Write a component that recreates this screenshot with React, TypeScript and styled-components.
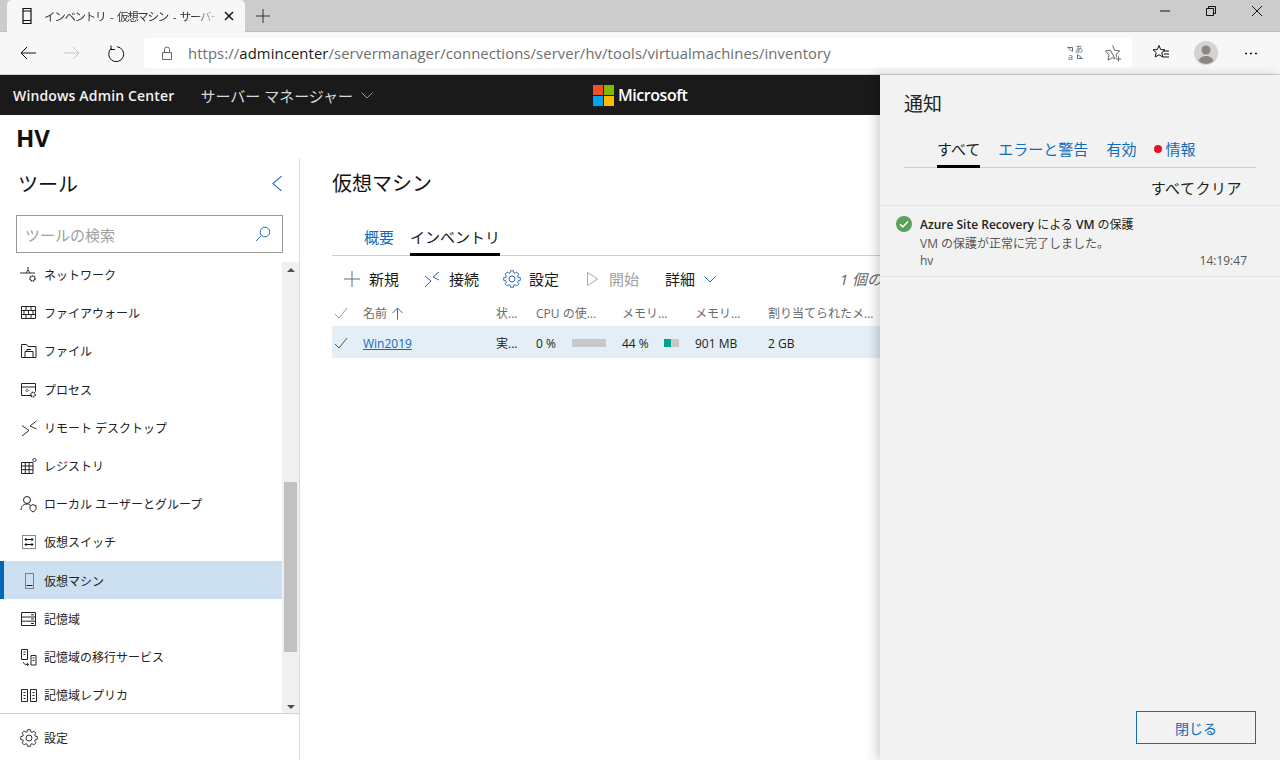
import styled, { createGlobalStyle } from "styled-components"

const font = `"Open Sans", "Noto Sans CJK JP", sans-serif`

const GlobalStyle = createGlobalStyle`
  html, body, #root {
    margin: 0;
    height: 100%;
    overflow: hidden;
  }
  * {
    box-sizing: border-box;
  }
  body {
    font-family: ${font};
    color: #1a1a1a;
    background: #fff;
  }
`

const Frame = styled.div`
  display: flex;
  flex-direction: column;
  width: 1280px;
  height: 760px;
`

/* browser chrome */
const TabStrip = styled.div`
  display: flex;
  align-items: flex-end;
  height: 32px;
  padding-left: 7px;
  background: #cccccc;
  border-bottom: 1px solid #bdbdbd;
`
const BrowserTab = styled.div`
  display: flex;
  align-items: center;
  width: 238px;
  height: 32px;
  margin-bottom: -1px;
  padding: 0 10px 0 11px;
  background: #f7f7f7;
  border-radius: 5px 5px 0 0;
`
const TabTitle = styled.span`
  width: 176px;
  margin-left: 8px;
  overflow: hidden;
  white-space: nowrap;
  font-size: 11.5px;
  letter-spacing: -1.3px;
  word-spacing: 3px;
  color: #333;
  mask-image: linear-gradient(to right, #000 150px, transparent 176px);
`
const TabClose = styled.span`
  display: flex;
  margin-left: 8px;
`
const NewTab = styled.span`
  display: flex;
  margin-left: 10px;
  align-self: center;
`
const WindowControls = styled.div`
  display: flex;
  align-self: flex-start;
  align-items: center;
  gap: 34px;
  height: 22px;
  margin-left: auto;
  padding-right: 17px;
`
const ToolBar = styled.div`
  display: flex;
  align-items: center;
  height: 43px;
  padding-bottom: 1px;
  background: #f7f7f7;
  border-bottom: 1px solid #d2d2d2;
`
const NavIcons = styled.div`
  display: flex;
  align-items: center;
  gap: 26px;
  width: 144px;
  padding-left: 19px;
`
const AddressBar = styled.div`
  display: flex;
  align-items: center;
  width: 988px;
  height: 30px;
  padding: 0 10px 0 16px;
  background: #fff;
  border-radius: 4px;
`
const Url = styled.span`
  margin-left: 14px;
  font-size: 14.8px;
  letter-spacing: 0.11px;
  color: #6e6e6e;
  white-space: nowrap;
  b {
    font-weight: 400;
    color: #1a1a1a;
  }
`
const AddressActions = styled.div`
  display: flex;
  align-items: center;
  gap: 20px;
  margin-left: auto;
`
const ToolActions = styled.div`
  display: flex;
  align-items: center;
  gap: 24px;
  margin-left: 20px;
`
const Avatar = styled.span`
  display: flex;
`

/* app bar */
const AppBar = styled.div`
  display: grid;
  grid-template-columns: 593px auto 1fr;
  align-items: center;
  height: 40px;
  background: #1a1a1a;
  color: #fff;
`
const AppLeft = styled.div`
  display: flex;
  align-items: center;
  padding-left: 13px;
`
const AppName = styled.span`
  font-size: 14px;
  font-weight: 600;
  letter-spacing: 0.15px;
  color: #f2f2f2;
`
const AppMenu = styled.span`
  display: flex;
  align-items: center;
  gap: 7px;
  margin-left: 26px;
  font-size: 15px;
  color: #d8d8d8;
`
const Brand = styled.div`
  display: flex;
  align-items: center;
  gap: 4px;
  font-size: 16px;
  font-weight: 600;
  letter-spacing: -0.45px;
`

/* page */
const Page = styled.div`
  position: relative;
  flex: 1;
  display: flex;
  flex-direction: column;
  min-height: 0;
`
const ServerName = styled.div`
  height: 43px;
  padding: 5px 0 0 16px;
  font-size: 24px;
  line-height: 36px;
  font-weight: 700;
  color: #111;
`
const Body = styled.div`
  flex: 1;
  display: flex;
  min-height: 0;
`
const Sidebar = styled.aside`
  display: flex;
  flex-direction: column;
  width: 300px;
  border-right: 1px solid #dcdcdc;
`
const SideHead = styled.div`
  display: flex;
  align-items: center;
  justify-content: space-between;
  height: 50px;
  padding: 0 14px 0 18px;
  font-size: 20px;
  color: #111;
`
const SearchBox = styled.div`
  display: flex;
  align-items: center;
  justify-content: space-between;
  width: 267px;
  height: 38px;
  margin: 7px 0 9px 16px;
  padding: 0 11px 0 8px;
  border: 1px solid #979797;
  font-size: 15px;
  color: #a0a0a0;
`
const ListArea = styled.div`
  flex: 1;
  display: flex;
  min-height: 0;
`
const ToolList = styled.div`
  flex: 1;
  overflow: hidden;
`
const ToolRows = styled.div`
  margin-top: -7px;
`
const ToolRow = styled.div<{ $active?: boolean }>`
  display: flex;
  align-items: center;
  gap: 6px;
  height: 38.2px;
  padding-top: 2px;
  padding-left: ${({ $active }) => ($active ? "16px" : "20px")};
  border-left: ${({ $active }) => ($active ? "4px solid #0067b8" : "0")};
  background: ${({ $active }) => ($active ? "#cce0f1" : "transparent")};
  font-size: 12px;
  color: #222;
  white-space: nowrap;
`
const ScrollTrack = styled.div`
  display: flex;
  flex-direction: column;
  align-items: center;
  width: 17px;
  background: #f0f0f0;
`
const ScrollArrow = styled.span<{ $down?: boolean }>`
  flex: none;
  width: 0;
  height: 0;
  margin: 6px 0 4px;
  border-left: 4px solid transparent;
  border-right: 4px solid transparent;
  ${({ $down }) =>
    $down ? "border-top: 4px solid #505050;" : "border-bottom: 4px solid #505050;"}
`
const ScrollThumb = styled.span`
  flex: none;
  width: 13px;
  height: 170px;
  margin-top: 206px;
  margin-bottom: auto;
  background: #c1c1c1;
`
const SideFoot = styled.div`
  display: flex;
  align-items: center;
  gap: 6px;
  height: 47px;
  padding: 2px 0 0 20px;
  border-top: 1px solid #d0d0d0;
  font-size: 12px;
  color: #222;
`

/* main */
const Main = styled.main`
  flex: 1;
  min-width: 0;
  padding: 0 0 0 32px;
  overflow: hidden;
`
const MainTitle = styled.h1`
  margin: 0;
  height: 50px;
  font-size: 20px;
  font-weight: 400;
  line-height: 52px;
  color: #111;
`
const TabRow = styled.div<{ $indent: number; $gap: number; $height: number; $top?: number }>`
  display: flex;
  align-items: flex-start;
  gap: ${({ $gap }) => $gap}px;
  height: ${({ $height }) => $height}px;
  padding-left: ${({ $indent }) => $indent}px;
  padding-top: ${({ $top = 0 }) => $top}px;
  border-bottom: 1px solid #cfcfcf;
`
const TabLabel = styled.span<{ $active?: boolean }>`
  position: relative;
  display: flex;
  align-items: center;
  gap: 3px;
  font-size: 15px;
  line-height: 24px;
  white-space: nowrap;
  color: ${({ $active }) => ($active ? "#1a1a1a" : "#0f6cbd")};
  ${({ $active }) =>
    $active &&
    `&:after {
      content: "";
      position: absolute;
      left: 0;
      right: 0;
      top: 28px;
      height: 3px;
      background: #000;
    }`}
`
const RedDot = styled.span`
  width: 8px;
  height: 8px;
  border-radius: 50%;
  background: #e81123;
`
const CommandBar = styled.div`
  display: flex;
  align-items: center;
  width: 580px;
  height: 44px;
  padding: 1px 0 0 11px;
`
const Command = styled.span<{ $disabled?: boolean }>`
  display: flex;
  align-items: center;
  gap: 8px;
  margin-right: ${({ $disabled }) => ($disabled ? 26 : 24)}px;
  font-size: 15px;
  white-space: nowrap;
  color: ${({ $disabled }) => ($disabled ? "#a0a0a0" : "#1a1a1a")};
`
const Count = styled.span`
  margin-left: auto;
  font-size: 15px;
  font-style: italic;
  color: #666;
  white-space: nowrap;
`
const GridRow = styled.div<{ $selected?: boolean }>`
  display: grid;
  grid-template-columns: 31px 133px 40px 86px 73px 73px 1fr;
  align-items: center;
  height: ${({ $selected }) => ($selected ? "30px" : "28px")};
  font-size: 12px;
  background: ${({ $selected }) => ($selected ? "#e3eef7" : "transparent")};
  color: ${({ $selected }) => ($selected ? "#222" : "#6a6a6a")};
  border-bottom: ${({ $selected }) => ($selected ? "0" : "2px solid #ececec")};
  white-space: nowrap;
`
const CheckCell = styled.span`
  display: flex;
  padding-left: 2px;
`
const SortCell = styled.span`
  display: flex;
  align-items: center;
  gap: 4px;
`
const NameLink = styled.a`
  color: #0f6cbd;
  text-decoration: underline;
`
const BarCell = styled.span`
  display: flex;
  align-items: center;
`
const BarValue = styled.span<{ $width: number }>`
  width: ${({ $width }) => $width}px;
`
const Meter = styled.span<{ $width: number }>`
  display: block;
  width: ${({ $width }) => $width}px;
  height: 8px;
  background: #c8c8c8;
`
const MeterFill = styled.span`
  display: block;
  height: 100%;
  background: #00a38d;
`

/* notifications */
const Pane = styled.section`
  position: absolute;
  top: -40px;
  right: 0;
  bottom: 0;
  display: flex;
  flex-direction: column;
  width: 400px;
  background: #f2f2f2;
  box-shadow: -4px 0 10px rgba(0, 0, 0, 0.18);
`
const PaneTitle = styled.h2`
  margin: 0;
  padding-left: 24px;
  height: 58px;
  font-size: 19px;
  font-weight: 400;
  line-height: 58px;
  color: #222;
`
const PaneTabs = styled.div`
  margin: 4px 24px 0;
`
const ClearRow = styled.div`
  height: 38px;
  padding: 8px 38px 0 0;
  text-align: right;
  font-size: 15px;
  letter-spacing: 0.5px;
  line-height: 24px;
  color: #222;
  border-bottom: 1px solid #e2e2e2;
`
const Notice = styled.div`
  display: grid;
  grid-template-columns: 16px 1fr auto;
  align-content: start;
  column-gap: 8px;
  height: 71px;
  padding: 10px 33px 0 16px;
  border-bottom: 1px solid #e2e2e2;
  font-size: 12px;
  color: #555;
`
const NoticeTitle = styled.div`
  grid-column: 2 / 4;
  height: 18px;
  line-height: 18px;
  color: #222;
  b {
    font-weight: 600;
  }
`
const NoticeText = styled.div`
  grid-column: 2 / 4;
  height: 19px;
  line-height: 19px;
`
const NoticeHost = styled.div`
  grid-column: 2;
  line-height: 15px;
`
const NoticeTime = styled.div`
  font-size: 12px;
  line-height: 15px;
`
const PaneFoot = styled.div`
  display: flex;
  justify-content: flex-end;
  margin-top: auto;
  padding: 0 24px 16px;
`
const CloseButton = styled.button`
  width: 120px;
  height: 33px;
  background: transparent;
  border: 1px solid #0f6cbd;
  font-family: ${font};
  font-size: 14px;
  color: #0f6cbd;
`

type IconProps = { s?: number; c?: string; children: React.ReactNode; box?: number }

const Ico = ({ s = 18, c = "#333", box = 18, children }: IconProps) => (
  <svg
    width={s}
    height={s}
    viewBox={`0 0 ${box} ${box}`}
    fill="none"
    stroke={c}
    strokeWidth="1"
    style={{ flex: "none" }}
  >
    {children}
  </svg>
)

// 8 tooth outline, same shape as the fabric settings glyph
const gearPath = (() => {
  const pts: string[] = []
  for (let i = 0; i < 8; i++) {
    const a = (i * Math.PI) / 4
    const at = (r: number, d: number) =>
      `${(9 + r * Math.cos(a + d)).toFixed(2)} ${(9 + r * Math.sin(a + d)).toFixed(2)}`
    pts.push(at(6.4, -0.3), at(8.4, -0.17), at(8.4, 0.17), at(6.4, 0.3))
  }
  return `M${pts.join("L")}Z`
})()

const Gear = ({ c = "#333", s = 18 }: { c?: string; s?: number }) => (
  <Ico s={s} c={c}>
    <path d={gearPath} />
    <circle cx="9" cy="9" r="3" />
  </Ico>
)

const Connect = ({ c = "#333" }: { c?: string }) => (
  <Ico c={c}>
    <path d="M2 6l6 5-6 6" />
    <path d="M16 2l-6 5 6 3" />
  </Ico>
)

const tools: { label: string; icon: React.ReactNode; active?: boolean }[] = [
  {
    label: "ネットワーク",
    icon: (
      <Ico>
        <path d="M0 7h15M6 7l2-3 2 3M8 1v3" />
        <circle cx="12.5" cy="12.5" r="2.5" strokeWidth="1.6" strokeDasharray="1.5 .6" />
      </Ico>
    ),
  },
  {
    label: "ファイアウォール",
    icon: (
      <Ico c="#222">
        <path d="M1.5 2.5h14v12h-14zM1.5 6.5h14M1.5 10.5h14M6 2.5v4M11 2.5v4M4 6.5v4M8.5 6.5v4M13 6.5v4M6 10.5v4M11 10.5v4" />
      </Ico>
    ),
  },
  {
    label: "ファイル",
    icon: (
      <Ico c="#222">
        <path d="M1.5 15.5v-13h5l1.5 2h8v11zM5 15.5v-6h8v6M7 9.5v-2h4" />
      </Ico>
    ),
  },
  {
    label: "プロセス",
    icon: (
      <Ico c="#222">
        <path d="M11 14.5H1.5v-12h14v8M1.5 6h14" />
        <circle cx="7" cy="9.5" r="1.2" strokeDasharray="1 .5" />
        <circle cx="13" cy="13.5" r="2.2" strokeWidth="1.4" strokeDasharray="1.4 .6" />
      </Ico>
    ),
  },
  {
    label: "リモート デスクトップ",
    icon: (
      <Ico>
        <path d="M2 6.5l7 5-7 5.5M16.500 2l-6.500 5 6.500 3" />
      </Ico>
    ),
  },
  {
    label: "レジストリ",
    icon: (
      <Ico c="#222">
        <path d="M1.500 5.500h11.500v11H1.500zM1.500 9h11.500M1.500 12.700h11.500M5.300 5.500v11M9.100 5.500v11" />
        <path d="M14.500 1l2 2-2 2-2-2z" />
      </Ico>
    ),
  },
  {
    label: "ローカル ユーザーとグループ",
    icon: (
      <Ico c="#222">
        <circle cx="7" cy="5" r="3.500" />
        <path d="M1 15c0-3.500 2.500-6 6-6 1 0 2 .2 2.800.7M10 10.500c1.300 0 2.300-.4 3-1 .8.600 1.800 1 3 1v3c0 1.500-1.500 2.500-3 3.500-1.500-1-3-2-3-3.500z" />
      </Ico>
    ),
  },
  {
    label: "仮想スイッチ",
    icon: (
      <Ico c="#111">
        <path d="M2.500 2.500h13v13h-13z" strokeDasharray="1 1" />
        <path d="M5 6.500h8M11.500 5l1.500 1.500L11.500 8M6.500 5L5 6.500 6.500 8M5 11.500h8M11.500 10l1.500 1.500-1.500 1.500M6.500 10L5 11.500 6.500 13" />
      </Ico>
    ),
  },
  {
    label: "仮想マシン",
    active: true,
    icon: (
      <Ico c="#222">
        <path d="M5.500 1.500h8v15h-8z" strokeDasharray="1 1" />
        <path d="M6.500 13.500h6" />
      </Ico>
    ),
  },
  {
    label: "記憶域",
    icon: (
      <Ico c="#222">
        <path d="M1.500 2.500h14v13h-14zM1.500 7h14M1.500 11.200h14M11 4.800h3M11 9h3M11 13.500h3" />
      </Ico>
    ),
  },
  {
    label: "記憶域の移行サービス",
    icon: (
      <Ico c="#222">
        <path d="M1.500 1.500h6v10h-6zM3.500 4h2M3.500 6.500h2M11 7.500h5v9.500h-5zM12.500 10h2M12.500 12.500h2M3.500 14c0 2 1 2.500 5 2.500M7 14.800l1.600 1.700L7 18" />
      </Ico>
    ),
  },
  {
    label: "記憶域レプリカ",
    icon: (
      <Ico c="#222">
        <path d="M1.500 3.500h6v12h-6zM10.500 3.500h6v12h-6zM3.500 6.500h2M3.500 9.500h2M3.500 12.500h2M12.500 6.500h2M12.500 9.500h2M12.500 12.500h2" />
      </Ico>
    ),
  },
]

const MsLogo = () => (
  <svg width="21" height="21" viewBox="0 0 21 21">
    <rect width="10" height="10" fill="#f25022" />
    <rect x="11" width="10" height="10" fill="#7fba00" />
    <rect y="11" width="10" height="10" fill="#00a4ef" />
    <rect x="11" y="11" width="10" height="10" fill="#ffb900" />
  </svg>
)

const Check = ({ c = "#777" }: { c?: string }) => (
  <Ico s={14} box={14} c={c}>
    <path d="M1 8l4 4 8-10" />
  </Ico>
)

export default function App() {
  return (
    <Frame>
      <GlobalStyle />
      <TabStrip>
        <BrowserTab>
          <Ico s={18} c="#111">
            <path d="M5 1.500h8v15H5zM5 4h8M5 13.500h8" strokeWidth="1.200" />
          </Ico>
          <TabTitle>インベントリ - 仮想マシン - サーバー マネージャー</TabTitle>
          <TabClose>
            <Ico s={12} box={12} c="#111">
              <path d="M2 2l8 8M10 2l-8 8" strokeWidth="1.500" />
            </Ico>
          </TabClose>
        </BrowserTab>
        <NewTab>
          <Ico s={16} box={16} c="#333">
            <path d="M8 1v14M1 8h14" />
          </Ico>
        </NewTab>
        <WindowControls>
          <Ico s={12} box={12} c="#111"><path d="M1 6h10" /></Ico>
          <Ico s={12} box={12} c="#111"><path d="M1.500 3.500h7v7h-7zM3.500 3.500V1.500h7v7H8.500" /></Ico>
          <Ico s={12} box={12} c="#111"><path d="M1 1l10 10M11 1L1 11" /></Ico>
        </WindowControls>
      </TabStrip>
      <ToolBar>
        <NavIcons>
          <Ico c="#111"><path d="M17 9H2M8 3L2 9l6 6" /></Ico>
          <Ico c="#c4c4c4"><path d="M1 9h15M10 3l6 6-6 6" /></Ico>
          <Ico c="#111"><path d="M10 2.200A7.500 7.500 0 1 1 4.500 3.800M4 1v4h4" transform="translate(0 .5)" /></Ico>
        </NavIcons>
        <AddressBar>
          <Ico s={14} box={14} c="#666"><path d="M2.500 6.500h9v7h-9zM4.500 6.500V3.500a2.500 2.500 0 0 1 5 0v3" /></Ico>
          <Url>https://<b>admincenter</b>/servermanager/connections/server/hv/tools/virtualmachines/inventory</Url>
          <AddressActions>
            <Ico c="#666">
              <path d="M1.500 3.500h5v4M2 3.500l4 4" />
              <path d="M16.500 14.500h-5v-4M16 14.500l-4-4" />
              <text x="9" y="8" fontSize="8" fill="#666" stroke="none">あ</text>
              <text x="2" y="16" fontSize="9" fill="#666" stroke="none">a</text>
            </Ico>
            <Ico c="#666">
              <path d="M8.500 1.500l2.200 4.800 5 .6-3.700 3.400.6 3.200M11 14.800l-2.500-1.200-4.500 2.500 1-5L1.500 7l5-.7zM14.500 12.500v5M12 15h5" />
            </Ico>
          </AddressActions>
        </AddressBar>
        <ToolActions>
          <Ico c="#111">
            <path d="M7 1.500l1.700 4 4.300.4-3.200 2.800 1 4.300L7 10.800l-3.800 2.200 1-4.300L1 5.900l4.300-.4zM11 7h6M12 10h5M11 13h6" />
          </Ico>
          <Avatar>
            <svg width="24" height="24" viewBox="0 0 24 24">
              <circle cx="12" cy="12" r="12" fill="#d5d3cf" />
              <circle cx="12" cy="9" r="4.500" fill="#8a8886" />
              <path d="M4.500 20c1-3.500 4-5 7.500-5s6.500 1.500 7.500 5a11 11 0 0 1-15 0z" fill="#8a8886" />
            </svg>
          </Avatar>
          <Ico c="#111">
            <path d="M3 9.500h2M8 9.500h2M13 9.500h2" strokeWidth="1.500" />
          </Ico>
        </ToolActions>
      </ToolBar>
      <AppBar>
        <AppLeft>
          <AppName>Windows Admin Center</AppName>
          <AppMenu>
            サーバー マネージャー
            <Ico s={14} box={14} c="#7a9cc0"><path d="M1.500 4.500L7 10l5.500-5.500" /></Ico>
          </AppMenu>
        </AppLeft>
        <Brand>
          <MsLogo />
          Microsoft
        </Brand>
      </AppBar>
      <Page>
        <ServerName>HV</ServerName>
        <Body>
          <Sidebar>
            <SideHead>
              ツール
              <Ico s={16} box={14} c="#2b6fc0"><path d="M11 1L3.500 7.500 11 14" /></Ico>
            </SideHead>
            <SearchBox>
              ツールの検索
              <Ico s={16} box={16} c="#2b6fc0"><circle cx="10" cy="6" r="4.800" /><path d="M6.500 9.500L1 15" /></Ico>
            </SearchBox>
            <ListArea>
              <ToolList>
                <ToolRows>
                  {tools.map((t) => (
                    <ToolRow key={t.label} $active={t.active}>
                      {t.icon}
                      {t.label}
                    </ToolRow>
                  ))}
                </ToolRows>
              </ToolList>
              <ScrollTrack>
                <ScrollArrow />
                <ScrollThumb />
                <ScrollArrow $down />
              </ScrollTrack>
            </ListArea>
            <SideFoot>
              <Gear />
              設定
            </SideFoot>
          </Sidebar>
          <Main>
            <MainTitle>仮想マシン</MainTitle>
            <TabRow $indent={32} $gap={16} $height={48} $top={17}>
              <TabLabel>概要</TabLabel>
              <TabLabel $active>インベントリ</TabLabel>
            </TabRow>
            <CommandBar>
              <Command>
                <Ico c="#5a6a9a"><path d="M9 1v16M1 9h16" /></Ico>
                新規
              </Command>
              <Command>
                <Connect c="#2b5fa8" />
                接続
              </Command>
              <Command>
                <Gear c="#2b6fc0" />
                設定
              </Command>
              <Command $disabled>
                <Ico c="#a8a8a8"><path d="M4.500 2.500l10 6.500-10 6.500z" /></Ico>
                開始
              </Command>
              <Command>
                詳細
                <Ico s={14} box={14} c="#2b6fc0"><path d="M1.500 4.500L7 10l5.500-5.500" /></Ico>
              </Command>
              <Count>1 個の項目</Count>
            </CommandBar>
            <GridRow>
              <CheckCell><Check c="#999" /></CheckCell>
              <SortCell>
                名前
                <Ico s={13} box={13} c="#2b6fc0"><path d="M6.500 12.500V1M1.500 6l5-5 5 5" /></Ico>
              </SortCell>
              <span>状...</span>
              <span>CPU の使...</span>
              <span>メモリ...</span>
              <span>メモリ...</span>
              <span>割り当てられたメ...</span>
            </GridRow>
            <GridRow $selected>
              <CheckCell><Check c="#555" /></CheckCell>
              <span><NameLink>Win2019</NameLink></span>
              <span>実...</span>
              <BarCell>
                <BarValue $width={36}>0 %</BarValue>
                <Meter $width={34} />
              </BarCell>
              <BarCell>
                <BarValue $width={42}>44 %</BarValue>
                <Meter $width={15}>
                  <MeterFill style={{ width: "44%" }} />
                </Meter>
              </BarCell>
              <span>901 MB</span>
              <span>2 GB</span>
            </GridRow>
          </Main>
        </Body>
        <Pane>
          <PaneTitle>通知</PaneTitle>
          <PaneTabs>
            <TabRow $indent={33} $gap={18} $height={31}>
              <TabLabel $active>すべて</TabLabel>
              <TabLabel>エラーと警告</TabLabel>
              <TabLabel>有効</TabLabel>
              <TabLabel>
                <RedDot />
                情報
              </TabLabel>
            </TabRow>
          </PaneTabs>
          <ClearRow>すべてクリア</ClearRow>
          <Notice>
            <svg width="16" height="16" viewBox="0 0 16 16">
              <circle cx="8" cy="8" r="8" fill="#5ba15c" />
              <path d="M4 8.200l2.800 2.700L12 5.500" fill="none" stroke="#fff" strokeWidth="1.500" />
            </svg>
            <NoticeTitle><b>Azure Site Recovery</b> による <b>VM</b> の保護</NoticeTitle>
            <NoticeText>VM の保護が正常に完了しました。</NoticeText>
            <NoticeHost>hv</NoticeHost>
            <NoticeTime>14:19:47</NoticeTime>
          </Notice>
          <PaneFoot>
            <CloseButton>閉じる</CloseButton>
          </PaneFoot>
        </Pane>
      </Page>
    </Frame>
  )
}
